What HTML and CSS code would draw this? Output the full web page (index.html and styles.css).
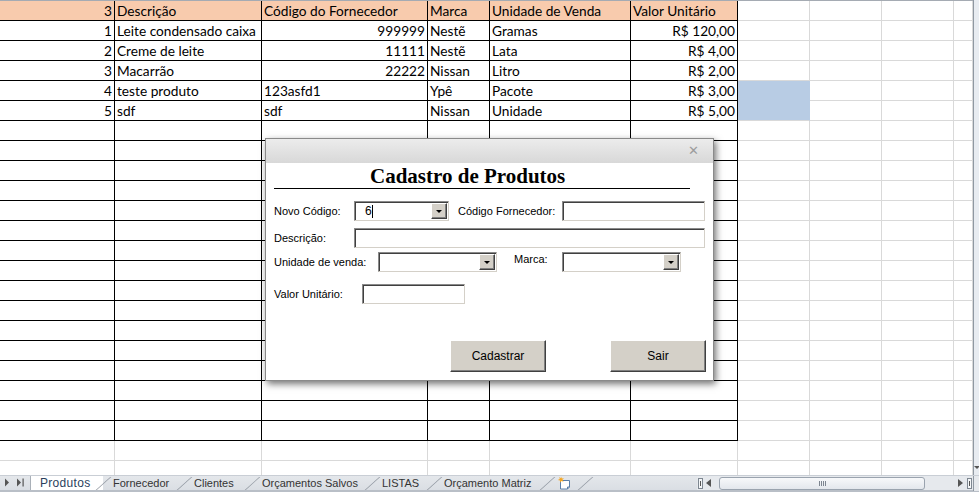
FILE: index.html
```html
<!DOCTYPE html>
<html lang="pt-BR">
<head>
<meta charset="utf-8">
<title>Cadastro de Produtos</title>
<link rel="stylesheet" href="styles.css">
</head>
<body>
<div class="app">
  <div class="sheet">
    <div class="grid">
      <div class="c k h n">3</div><div class="c k h">Descrição</div><div class="c k h">Código do Fornecedor</div><div class="c k h">Marca</div><div class="c k h">Unidade de Venda</div><div class="c k h">Valor Unitário</div><div class="c"></div><div class="c"></div><div class="c"></div><div class="c"></div>
      <div class="c k n">1</div><div class="c k">Leite condensado caixa</div><div class="c k n">999999</div><div class="c k">Nestẽ</div><div class="c k">Gramas</div><div class="c k n">R$ 120,00</div><div class="c"></div><div class="c"></div><div class="c"></div><div class="c"></div>
      <div class="c k n">2</div><div class="c k">Creme de leite</div><div class="c k n">11111</div><div class="c k">Nestẽ</div><div class="c k">Lata</div><div class="c k n">R$ 4,00</div><div class="c"></div><div class="c"></div><div class="c"></div><div class="c"></div>
      <div class="c k n">3</div><div class="c k">Macarrão</div><div class="c k n">22222</div><div class="c k">Nissan</div><div class="c k">Litro</div><div class="c k n">R$ 2,00</div><div class="c"></div><div class="c"></div><div class="c"></div><div class="c"></div>
      <div class="c k n">4</div><div class="c k">teste produto</div><div class="c k">123asfd1</div><div class="c k">Ypê</div><div class="c k">Pacote</div><div class="c k n">R$ 3,00</div><div class="c sel sel-top"></div><div class="c"></div><div class="c"></div><div class="c"></div>
      <div class="c k n">5</div><div class="c k">sdf</div><div class="c k">sdf</div><div class="c k">Nissan</div><div class="c k">Unidade</div><div class="c k n">R$ 5,00</div><div class="c sel"></div><div class="c"></div><div class="c"></div><div class="c"></div>
      <div class="c k"></div><div class="c k"></div><div class="c k"></div><div class="c k"></div><div class="c k"></div><div class="c k"></div><div class="c"></div><div class="c"></div><div class="c"></div><div class="c"></div>
      <div class="c k"></div><div class="c k"></div><div class="c k"></div><div class="c k"></div><div class="c k"></div><div class="c k"></div><div class="c"></div><div class="c"></div><div class="c"></div><div class="c"></div>
      <div class="c k"></div><div class="c k"></div><div class="c k"></div><div class="c k"></div><div class="c k"></div><div class="c k"></div><div class="c"></div><div class="c"></div><div class="c"></div><div class="c"></div>
      <div class="c k"></div><div class="c k"></div><div class="c k"></div><div class="c k"></div><div class="c k"></div><div class="c k"></div><div class="c"></div><div class="c"></div><div class="c"></div><div class="c"></div>
      <div class="c k"></div><div class="c k"></div><div class="c k"></div><div class="c k"></div><div class="c k"></div><div class="c k"></div><div class="c"></div><div class="c"></div><div class="c"></div><div class="c"></div>
      <div class="c k"></div><div class="c k"></div><div class="c k"></div><div class="c k"></div><div class="c k"></div><div class="c k"></div><div class="c"></div><div class="c"></div><div class="c"></div><div class="c"></div>
      <div class="c k"></div><div class="c k"></div><div class="c k"></div><div class="c k"></div><div class="c k"></div><div class="c k"></div><div class="c"></div><div class="c"></div><div class="c"></div><div class="c"></div>
      <div class="c k"></div><div class="c k"></div><div class="c k"></div><div class="c k"></div><div class="c k"></div><div class="c k"></div><div class="c"></div><div class="c"></div><div class="c"></div><div class="c"></div>
      <div class="c k"></div><div class="c k"></div><div class="c k"></div><div class="c k"></div><div class="c k"></div><div class="c k"></div><div class="c"></div><div class="c"></div><div class="c"></div><div class="c"></div>
      <div class="c k"></div><div class="c k"></div><div class="c k"></div><div class="c k"></div><div class="c k"></div><div class="c k"></div><div class="c"></div><div class="c"></div><div class="c"></div><div class="c"></div>
      <div class="c k"></div><div class="c k"></div><div class="c k"></div><div class="c k"></div><div class="c k"></div><div class="c k"></div><div class="c"></div><div class="c"></div><div class="c"></div><div class="c"></div>
      <div class="c k"></div><div class="c k"></div><div class="c k"></div><div class="c k"></div><div class="c k"></div><div class="c k"></div><div class="c"></div><div class="c"></div><div class="c"></div><div class="c"></div>
      <div class="c k"></div><div class="c k"></div><div class="c k"></div><div class="c k"></div><div class="c k"></div><div class="c k"></div><div class="c"></div><div class="c"></div><div class="c"></div><div class="c"></div>
      <div class="c k"></div><div class="c k"></div><div class="c k"></div><div class="c k"></div><div class="c k"></div><div class="c k"></div><div class="c"></div><div class="c"></div><div class="c"></div><div class="c"></div>
      <div class="c k"></div><div class="c k"></div><div class="c k"></div><div class="c k"></div><div class="c k"></div><div class="c k"></div><div class="c"></div><div class="c"></div><div class="c"></div><div class="c"></div>
      <div class="c k"></div><div class="c k"></div><div class="c k"></div><div class="c k"></div><div class="c k"></div><div class="c k"></div><div class="c"></div><div class="c"></div><div class="c"></div><div class="c"></div>
      <div class="c"></div><div class="c"></div><div class="c"></div><div class="c"></div><div class="c"></div><div class="c"></div><div class="c"></div><div class="c"></div><div class="c"></div><div class="c"></div>
      <div class="c"></div><div class="c"></div><div class="c"></div><div class="c"></div><div class="c"></div><div class="c"></div><div class="c"></div><div class="c"></div><div class="c"></div><div class="c"></div>
    </div>
    <div class="vscroll"><span class="vdown"></span></div>
  </div>

  <div class="tabbar">
    <div class="nav">
      <svg width="30" height="15" viewBox="0 0 30 15"><path d="M5 3.5 L9 7.5 L5 11.5 Z" fill="#555"/><path d="M17 3.5 L21 7.5 L17 11.5 Z" fill="#555"/><rect x="22.5" y="3.5" width="1.2" height="8" fill="#555"/></svg>
    </div>
    <div class="tab active first">Produtos</div>
    <div class="tab">Fornecedor</div>
    <div class="tab">Clientes</div>
    <div class="tab">Orçamentos Salvos</div>
    <div class="tab">LISTAS</div>
    <div class="tab">Orçamento Matriz</div>
    <div class="tab newtab">
      <svg width="16" height="14" viewBox="0 0 16 14"><path d="M3.5 4.5 H12.5 V11 L10.5 13 H3.5 Z" fill="#fff" stroke="#5b7fa8"/><path d="M12.5 11 H10.5 V13" fill="none" stroke="#5b7fa8"/><path d="M4 0.5 L4.8 2.6 L7 2.2 L5.4 3.8 L6.6 5.8 L4.4 5 L3 6.8 L3 4.6 L0.8 4 L2.8 3 L2.2 0.9 L3.8 2.2 Z" fill="#f5a623"/></svg>
    </div>
    <div class="hscroll">
      <span class="split"></span>
      <span class="harrow left"></span>
      <div class="track"><div class="thumb"><span class="grip"></span></div></div>
      <span class="harrow right"></span>
      <span class="split"></span>
      <span class="corner"></span>
    </div>
  </div>

  <div class="dialog">
    <div class="titlebar"><span class="close">✕</span></div>
    <div class="dbody">
      <h1 class="dtitle">Cadastro de Produtos</h1>
      <div class="rule"></div>
      <div class="row row1">
        <label class="lbl w80">Novo Código:</label>
        <div class="field combo w95"><span class="val">6</span><span class="caret"></span><span class="dd"></span></div>
        <label class="lbl lbl-forn">Código Fornecedor:</label>
        <div class="field w143"></div>
      </div>
      <div class="row row2">
        <label class="lbl w80">Descrição:</label>
        <div class="field w351"></div>
      </div>
      <div class="row row3">
        <label class="lbl w104">Unidade de venda:</label>
        <div class="field combo w119"><span class="dd"></span></div>
        <label class="lbl lbl-marca">Marca:</label>
        <div class="field combo w119"><span class="dd"></span></div>
      </div>
      <div class="row row4">
        <label class="lbl w88">Valor Unitário:</label>
        <div class="field w103"></div>
      </div>
      <div class="row buttons">
        <button class="btn btn-cad">Cadastrar</button>
        <button class="btn btn-sair">Sair</button>
      </div>
    </div>
  </div>
</div>
</body>
</html>
```

FILE: styles.css
```css
html, body {
  margin: 0;
  padding: 0;
}
body {
  width: 979px;
  height: 492px;
  overflow: hidden;
  background: #fff;
  font-family: "Lato", "Liberation Sans", sans-serif;
}
.app {
  position: relative;
  width: 979px;
  height: 492px;
  display: flex;
  flex-direction: column;
}

/* ---------- sheet ---------- */
.sheet {
  display: flex;
  height: 475px;
  flex: none;
}
.grid {
  width: 973px;
  height: 475px;
  box-sizing: border-box;
  overflow: hidden;
  border-top: 1px solid #a5abb3;
  display: grid;
  grid-template-columns: 115px 147px 166px 62px 141px 107px 72px 72px 72px 19px;
  grid-auto-rows: 20px;
  align-content: start;
}
.c {
  box-sizing: border-box;
  border-right: 1px solid #d9d9d9;
  border-bottom: 1px solid #d9d9d9;
  padding: 0 2px 0 2px;
  font-size: 13.7px;
  line-height: 19px;
  color: #000;
  white-space: nowrap;
  overflow: hidden;
}
.k {
  border-color: #000;
}
.h {
  background: #f8cbad;
}
.n {
  text-align: right;
}
.sel {
  background: #b8cce4;
  border-right-color: #b8cce4;
}
.sel-top {
  border-bottom-color: #b8cce4;
}

.vscroll {
  width: 6px;
  height: 475px;
  box-sizing: border-box;
  background: #e8ecf1;
  border-left: 1px solid #8f98a2;
  display: flex;
  flex-direction: column;
  justify-content: flex-end;
  align-items: center;
  padding-bottom: 6px;
}
.vdown {
  width: 0;
  height: 0;
  border-left: 3px solid transparent;
  border-right: 3px solid transparent;
  border-top: 3px solid #555;
}

/* ---------- tab bar ---------- */
.tabbar {
  height: 17px;
  flex: none;
  box-sizing: border-box;
  display: flex;
  align-items: stretch;
  background: linear-gradient(#e4e7eb, #dadee4);
  border-top: 1px solid #c9ced5;
  border-bottom: 2px solid #b9bfc7;
  font-family: "Liberation Sans", Arial, sans-serif;
  font-size: 11px;
  color: #333;
}
.nav {
  width: 31px;
  flex: none;
  box-sizing: border-box;
  border-right: 1px solid #a9b0b8;
  display: flex;
  align-items: center;
}
.nav svg {
  display: block;
  margin-top: -1px;
}
.tab {
  position: relative;
  flex: none;
  box-sizing: border-box;
  padding-left: 10px;
  line-height: 14px;
  white-space: nowrap;
}
.tab::after {
  content: "";
  position: absolute;
  right: -1px;
  top: 1px;
  height: 13px;
  width: 0;
  border-left: 1px solid #8d949d;
  transform: skewX(-48deg);
  transform-origin: 50% 50%;
}
.tab.first {
  padding-left: 9px;
  width: 72px;
}
.tab.active {
  background: #fff;
  color: #2b3f5c;
  font-size: 12px;
  letter-spacing: 0.3px;
}
.tab:nth-of-type(3) { width: 81px; }
.tab:nth-of-type(4) { width: 68px; }
.tab:nth-of-type(5) { width: 120px; }
.tab:nth-of-type(6) { width: 62px; }
.tab:nth-of-type(7) { width: 113px; }
.tab.newtab {
  width: 38px;
  display: flex;
  align-items: center;
}
.newtab svg {
  display: block;
}

.hscroll {
  margin-left: auto;
  width: 282px;
  flex: none;
  display: flex;
  align-items: center;
  background: #e6e9ed;
}
.split {
  width: 5px;
  height: 11px;
  box-sizing: border-box;
  border: 1px solid #7e8791;
  background: #f4f6f8;
  margin: 0 1px;
  position: relative;
}
.split::after {
  content: "";
  position: absolute;
  left: 1px;
  top: 2px;
  width: 1px;
  height: 5px;
  background: #555;
}
.harrow {
  width: 0;
  height: 0;
  border-top: 4px solid transparent;
  border-bottom: 4px solid transparent;
}
.harrow.left {
  border-right: 5px solid #555;
  margin: 0 4px 0 2px;
}
.harrow.right {
  border-left: 5px solid #555;
  margin: 0 3px 0 4px;
}
.track {
  flex: 1;
  height: 14px;
  display: flex;
  align-items: center;
}
.thumb {
  margin-left: 4px;
  width: 206px;
  height: 13px;
  box-sizing: border-box;
  border: 1px solid #9aa3ae;
  border-radius: 3px;
  background: linear-gradient(#f7f8fa, #e3e7ec);
  display: flex;
  align-items: center;
  justify-content: center;
}
.grip {
  width: 7px;
  height: 5px;
  background: repeating-linear-gradient(90deg, #7d8590 0 1px, transparent 1px 2px);
}
.corner {
  width: 6px;
  height: 15px;
  background: #e6e9ed;
  border-left: 1px solid #8f98a2;
  box-sizing: border-box;
}

/* ---------- dialog ---------- */
.dialog {
  position: absolute;
  left: 265px;
  top: 138px;
  width: 449px;
  height: 243px;
  box-sizing: border-box;
  border: 1px solid #8a8a8a;
  background: #fff;
  box-shadow: 2px 3px 7px rgba(0, 0, 0, 0.55);
  display: flex;
  flex-direction: column;
  font-family: "Liberation Sans", Arial, sans-serif;
  font-size: 11px;
  color: #000;
}
.titlebar {
  height: 24px;
  flex: none;
  background: linear-gradient(#ececec, #d8d8d8);
  position: relative;
}
.close {
  position: absolute;
  right: 14px;
  top: 4px;
  font-size: 13px;
  font-weight: bold;
  color: #9c9c9c;
  font-family: "DejaVu Sans", sans-serif;
}
.dbody {
  flex: 1;
  padding: 0 7px 0 8px;
  display: flex;
  flex-direction: column;
}
.dtitle {
  margin: 2px 0 0 96px;
  font-family: "Liberation Serif", "Times New Roman", serif;
  font-weight: bold;
  font-size: 21px;
  line-height: 22px;
  color: #000;
}
.rule {
  width: 416px;
  height: 1px;
  background: #000;
  margin-top: 1px;
}
.row {
  display: flex;
  align-items: center;
}
.row1 { margin-top: 12px; }
.row2 { margin-top: 7px; }
.row3 { margin-top: 4px; }
.row4 { margin-top: 12px; }
.buttons { margin-top: 36px; }

.lbl {
  flex: none;
  white-space: nowrap;
}
.w80 { width: 80px; }
.w88 { width: 88px; }
.w104 { width: 104px; }
.lbl-forn { margin-left: 9px; width: 104px; }
.lbl-marca { margin-left: 17px; width: 48px; align-self: flex-start; margin-top: 1px; }

.field {
  flex: none;
  box-sizing: border-box;
  height: 20px;
  border-top: 1px solid #8a8a8a;
  border-left: 1px solid #8a8a8a;
  border-right: 1px solid #d4d0c8;
  border-bottom: 1px solid #d4d0c8;
  box-shadow: inset 1px 1px 0 #404040;
  background: #fff;
}
.w95 { width: 95px; }
.w103 { width: 103px; }
.w119 { width: 119px; }
.w143 { width: 143px; }
.w351 { width: 351px; }
.combo {
  display: flex;
  align-items: center;
}
.val {
  margin-left: 10px;
  font-size: 12px;
}
.caret {
  width: 1px;
  height: 13px;
  background: #000;
  margin-left: 0;
}
.dd {
  margin-left: auto;
  margin-right: 1px;
  width: 16px;
  height: 16px;
  box-sizing: border-box;
  background: #d4d0c8;
  border-top: 1px solid #fff;
  border-left: 1px solid #fff;
  border-right: 1px solid #404040;
  border-bottom: 1px solid #404040;
  box-shadow: inset -1px -1px 0 #808080;
  display: flex;
  align-items: center;
  justify-content: center;
}
.dd::after {
  content: "";
  width: 0;
  height: 0;
  border-left: 3px solid transparent;
  border-right: 3px solid transparent;
  border-top: 3px solid #000;
  margin-top: 1px;
}

.btn {
  flex: none;
  width: 96px;
  height: 32px;
  box-sizing: border-box;
  background: #d4d0c8;
  border-top: 1px solid #fff;
  border-left: 1px solid #fff;
  border-right: 1px solid #404040;
  border-bottom: 1px solid #404040;
  box-shadow: inset -1px -1px 0 #808080;
  font-family: "Liberation Sans", Arial, sans-serif;
  font-size: 12px;
  color: #000;
  padding: 0;
}
.btn-cad { margin-left: 176px; }
.btn-sair { margin-left: 64px; }
```
